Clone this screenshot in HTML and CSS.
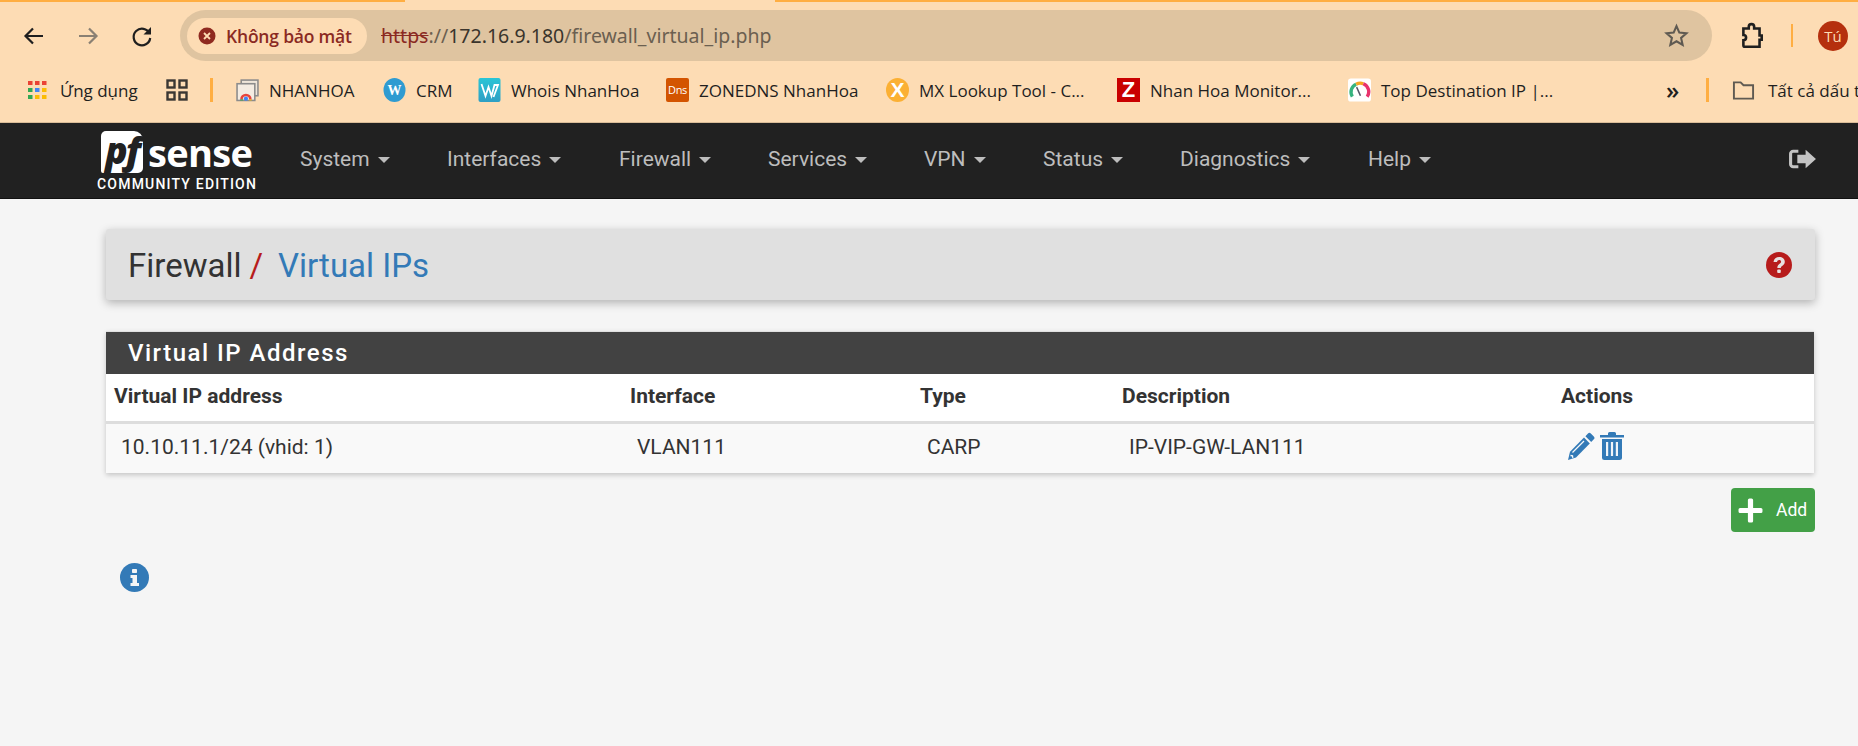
FILE: index.html
```html
<!DOCTYPE html>
<html lang="vi">
<head>
<meta charset="utf-8">
<title>pfSense - Firewall: Virtual IPs</title>
<link rel="stylesheet" href="styles.css">
</head>
<body>
<div class="chrome">
  <div class="strip"><span class="strip-left"></span><span class="strip-right"></span></div>
  <div class="toolbar">
    <svg class="tb-icon" viewBox="0 0 24 24"><path d="M21 12H4M11 4.500 3.500 12l7.500 7.500" fill="none" stroke="#1f1f1f" stroke-width="2.200"/></svg>
    <svg class="tb-icon" viewBox="0 0 24 24"><path d="M3 12h17M13 4.500l7.500 7.500-7.500 7.500" fill="none" stroke="#8a8073" stroke-width="2.200"/></svg>
    <svg class="tb-icon" viewBox="0 0 24 24"><path d="M19.500 9.500A8.300 8.300 0 1 0 20.200 14" fill="none" stroke="#1f1f1f" stroke-width="2.200"/><path d="M21 3v7.500h-7.500z" fill="#1f1f1f"/></svg>
    <div class="omnibox">
      <div class="chip">
        <svg class="chip-icon" viewBox="0 0 18 18"><circle cx="9" cy="9" r="8.500" fill="#8f2a20"/><path d="M6 6l6 6M12 6l-6 6" stroke="#fddcb4" stroke-width="1.800"/></svg>
        <span>Không bảo mật</span>
      </div>
      <div class="url"><s class="scheme">https</s><span class="url-dim">://</span><span class="url-host">172.16.9.180</span><span class="url-dim">/firewall_virtual_ip.php</span></div>
      <svg class="star" viewBox="0 0 24 24"><path d="M12 3l2.700 6.200 6.800.6-5.100 4.500 1.500 6.700L12 17.500 6.100 21l1.500-6.700L2.500 9.800l6.800-.6z" fill="none" stroke="#5f5a52" stroke-width="2"/></svg>
    </div>
    <svg class="ext" viewBox="0 0 24 26"><path d="M4 6h5V4.500a2.500 2.500 0 0 1 5 0V6h5v6.500h2v4h-2V23H5.500C4.500 23 4 22.500 4 21.500v-4.500a2.500 2.500 0 0 0 0-5z" fill="none" stroke="#1f1f1f" stroke-width="2.400"/></svg>
    <span class="sep sep-tool"></span>
    <span class="avatar">Tú</span>
  </div>
  <div class="bookmarks">
    <span class="bm bm-apps">
      <svg class="bm-icon" viewBox="0 0 20 20"><g fill="#ea4335"><rect x="0" y="1" width="4.500" height="4"/><rect x="7" y="1" width="4.500" height="4"/><rect x="14" y="1" width="4.500" height="4"/></g><rect x="0" y="8" width="4.500" height="4" fill="#34a853"/><rect x="7" y="8" width="4.500" height="4" fill="#4285f4"/><rect x="14" y="8" width="4.500" height="4" fill="#fbbc05"/><rect x="0" y="15" width="4.500" height="4" fill="#34a853"/><rect x="7" y="15" width="4.500" height="4" fill="#fbbc05"/><rect x="14" y="15" width="4.500" height="4" fill="#fbbc05"/></svg>
      <span>Ứng dụng</span>
    </span>
    <svg class="grid-icon" viewBox="0 0 22 22"><g fill="none" stroke="#3a3733" stroke-width="2.400"><rect x="1.500" y="1.500" width="7" height="7"/><rect x="13.500" y="1.500" width="7" height="7"/><rect x="1.500" y="13.500" width="7" height="7"/><rect x="13.500" y="13.500" width="7" height="7"/></g></svg>
    <span class="sep sep-a"></span>
    <span class="bm bm-nhan">
      <svg class="bm-icon" viewBox="0 0 22 22"><rect x="5" y="1.500" width="16" height="15" fill="#efe6da" stroke="#8c8c8c" stroke-width="1.500"/><rect x="1" y="5" width="17" height="16" fill="#f4ece2" stroke="#8c8c8c" stroke-width="1.500"/><path d="M4 20a5.500 5.500 0 0 1 11 0h-2.500a3 3 0 0 0-6 0z" fill="#e8453c"/><path d="M4 20h2.800v1H4z" fill="#34a853"/><path d="M12.500 20H15v1h-2.500z" fill="#fbbc05"/><circle cx="9.500" cy="19.300" r="2" fill="#4285f4"/></svg>
      <span>NHANHOA</span>
    </span>
    <span class="bm bm-crm">
      <svg class="bm-icon" viewBox="0 0 22 24"><ellipse cx="11" cy="12" rx="11" ry="12" fill="#2f9bd1"/><text class="w-glyph" x="11" y="17" text-anchor="middle">W</text></svg>
      <span>CRM</span>
    </span>
    <span class="bm bm-whois">
      <svg class="bm-icon" viewBox="0 0 22 24"><defs><linearGradient id="wg" x1="0" y1="0" x2="0" y2="1"><stop offset="0" stop-color="#29c5d6"/><stop offset="1" stop-color="#2f9fc4"/></linearGradient></defs><rect width="22" height="24" rx="2" fill="url(#wg)"/><path d="M3 6l4 12 3-9 3 9 3-11h3.500L15 19" fill="none" stroke="#fff" stroke-width="1.800"/></svg>
      <span>Whois NhanHoa</span>
    </span>
    <span class="bm bm-dns">
      <span class="tile tile-dns">Dns</span>
      <span>ZONEDNS NhanHoa</span>
    </span>
    <span class="bm bm-mx">
      <span class="tile tile-mx">X</span>
      <span>MX Lookup Tool - C...</span>
    </span>
    <span class="bm bm-z">
      <span class="tile tile-z">Z</span>
      <span>Nhan Hoa Monitor...</span>
    </span>
    <span class="bm bm-top">
      <svg class="bm-icon" viewBox="0 0 24 24"><rect width="24" height="24" rx="3" fill="#fff"/><path d="M4.500 19a9 9 0 0 1 4-13" fill="none" stroke="#36b37e" stroke-width="3.500"/><path d="M8.500 6a9 9 0 0 1 7.500-.5" fill="none" stroke="#f5a623" stroke-width="3.500"/><path d="M16 5.500A9 9 0 0 1 20 19" fill="none" stroke="#e8336d" stroke-width="3.500"/><path d="M9 9l4 9" stroke="#556" stroke-width="1.600"/></svg>
      <span>Top Destination IP |...</span>
    </span>
    <span class="chev">»</span>
    <span class="sep sep-b"></span>
    <span class="bm bm-all">
      <svg class="bm-icon" viewBox="0 0 24 22"><path d="M2 3h7l3 3h10v14H2z" fill="none" stroke="#5f5a52" stroke-width="2"/></svg>
      <span>Tất cả dấu trang</span>
    </span>
  </div>
</div>

<nav class="navbar">
  <div class="logo">
    <div class="logo-top"><span class="logo-pf">pf</span><span class="logo-sense">sense</span></div>
    <div class="logo-sub">COMMUNITY EDITION</div>
  </div>
  <ul class="menu">
    <li class="mi mi-system">System<i class="caret"></i></li>
    <li class="mi mi-interfaces">Interfaces<i class="caret"></i></li>
    <li class="mi mi-firewall">Firewall<i class="caret"></i></li>
    <li class="mi mi-services">Services<i class="caret"></i></li>
    <li class="mi mi-vpn">VPN<i class="caret"></i></li>
    <li class="mi mi-status">Status<i class="caret"></i></li>
    <li class="mi mi-diag">Diagnostics<i class="caret"></i></li>
    <li class="mi mi-help">Help<i class="caret"></i></li>
  </ul>
  <svg class="logout" viewBox="0 0 28 20"><path d="M10 1H5a4 4 0 0 0-4 4v10a4 4 0 0 0 4 4h5v-3H5a1 1 0 0 1-1-1V5a1 1 0 0 1 1-1h5z" fill="#c4c4c4"/><path d="M17 1l10 9-10 9v-5H9V6h8z" fill="#c4c4c4"/></svg>
</nav>

<main class="content">
  <header class="page-head">
    <h1 class="crumbs"><span>Firewall</span><span class="slash">/</span><a class="crumb-link">Virtual IPs</a></h1>
    <svg class="help" viewBox="0 0 26 26"><circle cx="13" cy="13" r="13" fill="#b71c1c"/><path d="M7.500 10c.4-3.400 2.700-5 5.700-5 3.200 0 5.600 2 5.600 4.700 0 3.800-4 3.800-4 6.300h-3.500c0-4.300 3.800-4.200 3.800-6.300 0-1-.9-1.700-1.900-1.700-1.200 0-2 .8-2.200 2.100z" fill="#e8e0e0"/><rect x="11.200" y="17.500" width="3.600" height="3.500" rx="1" fill="#e8e0e0"/></svg>
  </header>

  <section class="panel">
    <h2 class="panel-title">Virtual IP Address</h2>
    <table class="vip">
      <colgroup><col class="c1"><col class="c2"><col class="c3"><col class="c4"><col class="c5"></colgroup>
      <thead>
        <tr><th>Virtual IP address</th><th>Interface</th><th>Type</th><th>Description</th><th>Actions</th></tr>
      </thead>
      <tbody>
        <tr>
          <td>10.10.11.1/24 (vhid: 1)</td>
          <td>VLAN111</td>
          <td>CARP</td>
          <td>IP-VIP-GW-LAN111</td>
          <td class="actions">
            <svg class="act-pencil" viewBox="0 0 27 28"><path d="M20 1.500a2 2 0 0 1 2.800 0l3 3a2 2 0 0 1 0 2.800l-2.600 2.700-5.800-5.800z" fill="#337ab7"/><path d="M16 5.600l5.800 5.800L8 25.500 0 28l2-8.300z" fill="#337ab7"/><path d="M4.500 20.500 16 9" stroke="#f9f9f9" stroke-width="1.300"/><path d="M2.500 23.500l2 .3.300 2" fill="none" stroke="#f9f9f9" stroke-width="1.300"/></svg>
            <svg class="act-trash" viewBox="0 0 24 28"><path d="M0 3h8V1.500A1.500 1.500 0 0 1 9.500 0h5A1.500 1.500 0 0 1 16 1.500V3h8v2.500H0z" fill="#337ab7"/><path d="M2 7h20v18.500a2.500 2.500 0 0 1-2.500 2.500h-15A2.500 2.500 0 0 1 2 25.500z" fill="#337ab7"/><g fill="#f0f4f8"><rect x="6" y="10" width="2.200" height="14"/><rect x="10.900" y="10" width="2.200" height="14"/><rect x="15.800" y="10" width="2.200" height="14"/></g></svg>
          </td>
        </tr>
      </tbody>
    </table>
  </section>

  <div class="btn-row">
    <button class="btn-add">
      <svg class="plus" viewBox="0 0 24 24"><path d="M9.500 2a1.500 1.500 0 0 1 1.500-1.500h2A1.500 1.500 0 0 1 14.500 2v7.500H22a1.500 1.500 0 0 1 1.500 1.500v2a1.500 1.500 0 0 1-1.500 1.500h-7.500V22a1.500 1.500 0 0 1-1.500 1.500h-2A1.500 1.500 0 0 1 9.500 22v-7.500H2A1.500 1.500 0 0 1 .5 13v-2A1.500 1.500 0 0 1 2 9.500h7.500z" fill="#fff"/></svg>
      <span>Add</span>
    </button>
  </div>

  <svg class="info" viewBox="0 0 29 29"><circle cx="14.500" cy="14.500" r="14.500" fill="#337ab7"/><rect x="12" y="6" width="5" height="4" rx=".8" fill="#f5f5f5"/><path d="M10.500 12h6.500v8h2v3H10.500v-3h2v-5h-2z" fill="#f5f5f5"/></svg>
</main>
</body>
</html>
```

FILE: styles.css
```css
* { box-sizing: border-box; }
html, body { margin: 0; padding: 0; }
body {
  width: 1858px;
  height: 746px;
  overflow: hidden;
  background: #f5f5f5;
  font-family: Roboto, "Liberation Sans", sans-serif;
  color: #333;
}

/* browser chrome */
.chrome {
  height: 123px;
  background: #fddcb4;
  border-bottom: 1px solid #d9bc98;
  font-family: "Open Sans", "Noto Sans", sans-serif;
  color: #1f1f1f;
}
.strip { display: flex; justify-content: space-between; height: 2px; }
.strip-left { width: 405px; background: #ffae42; }
.strip-right { width: 1083px; background: #ffae42; }

.toolbar {
  display: flex;
  align-items: center;
  height: 67px;
  padding: 0 14px 0 22px;
}
.tb-icon { width: 24px; height: 24px; margin-right: 30px; flex: none; }
.omnibox {
  display: flex;
  align-items: center;
  width: 1532px;
  height: 51px;
  margin-left: -4px;
  padding: 0 23px 0 7px;
  background: #dfc4a0;
  border-radius: 26px;
  flex: none;
}
.chip {
  display: flex;
  align-items: center;
  gap: 10px;
  width: 180px;
  height: 36px;
  padding-left: 11px;
  background: #fddcb4;
  border-radius: 18px;
  font-size: 17.500px;
  font-weight: 600;
  letter-spacing: -.2px;
  color: #8b2a22;
  white-space: nowrap;
}
.chip-icon { width: 18px; height: 18px; flex: none; }
.url { flex: 1; padding-left: 14px; font-size: 19.500px; white-space: nowrap; font-family: "Noto Sans", sans-serif; }
.scheme { color: #8b2a22; }
.url-dim { color: #6b5f50; }
.url-host { color: #3a342c; }
.star { width: 25px; height: 25px; flex: none; }
.ext { width: 26px; height: 28px; margin-left: 27px; flex: none; }
.sep { display: block; width: 2px; background: #ffae42; flex: none; }
.sep-tool { height: 23px; margin-left: 26px; }
.avatar {
  width: 30px;
  height: 30px;
  margin-left: 25px;
  border-radius: 50%;
  background: #b5300e;
  color: #fddcb4;
  font-size: 15px;
  line-height: 30px;
  text-align: center;
  flex: none;
}

.bookmarks {
  display: flex;
  align-items: center;
  height: 42px;
  padding-left: 28px;
  overflow: hidden;
  white-space: nowrap;
  font-size: 17px;
}
.bm { display: flex; align-items: center; gap: 10px; flex: none; }
.bm-icon { width: 23px; height: 24px; flex: none; }
.bm-apps { width: 138px; gap: 12px; }
.bm-apps .bm-icon { width: 20px; height: 20px; }
.grid-icon { width: 22px; height: 22px; flex: none; }
.sep-a { width: 3px; height: 24px; margin: 0 23px 0 22px; }
.bm-nhan { width: 147px; }
.bm-crm { width: 95px; }
.bm-whois { width: 188px; }
.bm-dns { width: 220px; }
.bm-mx { width: 231px; }
.bm-z { width: 231px; }
.bm-top { width: 318px; }
.w-glyph { font: bold 14px "Liberation Serif", serif; fill: #fff; }
.tile {
  display: block;
  width: 23px;
  height: 24px;
  color: #fff;
  text-align: center;
  flex: none;
}
.tile-dns { background: #d35400; border-radius: 2px; font-size: 11px; line-height: 24px; letter-spacing: -.3px; }
.tile-mx { background: #fbb034; border-radius: 50%; font-size: 21px; font-weight: 700; line-height: 24px; font-family: "Liberation Sans", sans-serif; }
.tile-z { background: #c90000; font-size: 22px; font-weight: 700; line-height: 24px; font-family: "Liberation Sans", sans-serif; }
.chev { width: 40px; font-size: 24px; font-weight: 600; line-height: 24px; flex: none; }
.sep-b { width: 3px; height: 24px; margin-right: 23px; }
.bm-all { gap: 13px; }

/* pfSense navbar */
.navbar {
  display: flex;
  align-items: center;
  height: 75px;
  padding: 0 41px 0 97px;
  background: #212121;
  box-shadow: 0 1px 0 #111;
}
.logo { width: 203px; flex: none; color: #fff; }
.logo-top { display: flex; align-items: center; height: 43px; padding-left: 4px; }
.logo-pf {
  display: block;
  width: 42px;
  height: 42px;
  background: #fff;
  border-radius: 5px 9px 5px 2px;
  color: #212121;
  font: italic 800 37px/38px "Open Sans", sans-serif;
  letter-spacing: -2px;
  text-align: center;
}
.logo-sense { margin-left: 5px; font: 700 38px/42px "Open Sans", sans-serif; letter-spacing: -.7px; }
.logo-sub { margin-top: 3px; font-size: 14px; font-weight: 500; letter-spacing: 1.200px; line-height: 14px; white-space: nowrap; }

.menu { display: flex; flex: 1; margin: -4px 0 0; padding: 0; list-style: none; }
.mi { font-size: 21px; color: #bdbdbd; white-space: nowrap; flex: none; }
.mi-system { width: 147px; }
.mi-interfaces { width: 172px; }
.mi-firewall { width: 149px; }
.mi-services { width: 156px; }
.mi-vpn { width: 119px; }
.mi-status { width: 137px; }
.mi-diag { width: 188px; }
.caret {
  display: inline-block;
  margin-left: 8px;
  vertical-align: middle;
  border-top: 6px solid #bdbdbd;
  border-left: 6px solid transparent;
  border-right: 6px solid transparent;
}
.logout { width: 29px; height: 22px; flex: none; margin-top: -4px; }

/* content */
.content { padding: 0 43px 0 106px; }
.page-head {
  display: flex;
  align-items: center;
  justify-content: space-between;
  width: 1709px;
  height: 71px;
  margin-top: 31px;
  padding: 2px 23px 0 22px;
  background: #e0e0e0;
  border-radius: 3px;
  box-shadow: 0 3px 10px rgba(0, 0, 0, .28);
}
.help { margin-top: -2px; width: 26px; height: 26px; flex: none; }
.crumbs { margin: 0; font-size: 33px; font-weight: 400; color: #333; }
.slash { margin: 0 15px 0 8px; color: #b71c1c; }
.crumb-link { color: #337ab7; }

.panel {
  width: 1708px;
  margin-top: 31px;
  background: #fff;
  box-shadow: 0 2px 5px rgba(0, 0, 0, .2);
}
.panel-title {
  margin: 0;
  height: 43px;
  padding-left: 22px;
  background: #424242;
  border-top: 1px solid #e0e0e0;
  color: #fff;
  font-size: 24px;
  font-weight: 500;
  line-height: 42px;
  letter-spacing: 1.500px;
}
.vip { width: 100%; border-collapse: collapse; table-layout: fixed; font-size: 21px; }
.c1 { width: 516px; }
.c2 { width: 290px; }
.c3 { width: 202px; }
.c4 { width: 439px; }
th {
  height: 48px;
  padding: 0 8px 3px;
  text-align: left;
  font-weight: 700;
  color: #333;
  background: #fff;
  border-bottom: 3px solid #ddd;
}
td {
  height: 51px;
  padding: 0 15px 3px;
  color: #333;
  background: #f9f9f9;
}
td.actions { padding-bottom: 5px; }
.actions svg { display: inline-block; vertical-align: middle; }
.act-pencil { width: 27px; height: 28px; }
.act-trash { width: 24px; height: 28px; margin-left: 0; }

.btn-row { display: flex; width: 1709px; margin-top: 15px; padding-left: 1625px; }
.btn-add {
  display: flex;
  align-items: center;
  width: 84px;
  height: 44px;
  padding: 0 0 0 7px;
  border: 0;
  border-radius: 4px;
  background: #43a047;
  color: #fff;
  font: 400 17.500px Roboto, sans-serif;
}
.plus { width: 25px; height: 25px; margin-right: 13px; flex: none; }
.info { display: block; width: 29px; height: 29px; margin: 31px 0 0 14px; }
```
